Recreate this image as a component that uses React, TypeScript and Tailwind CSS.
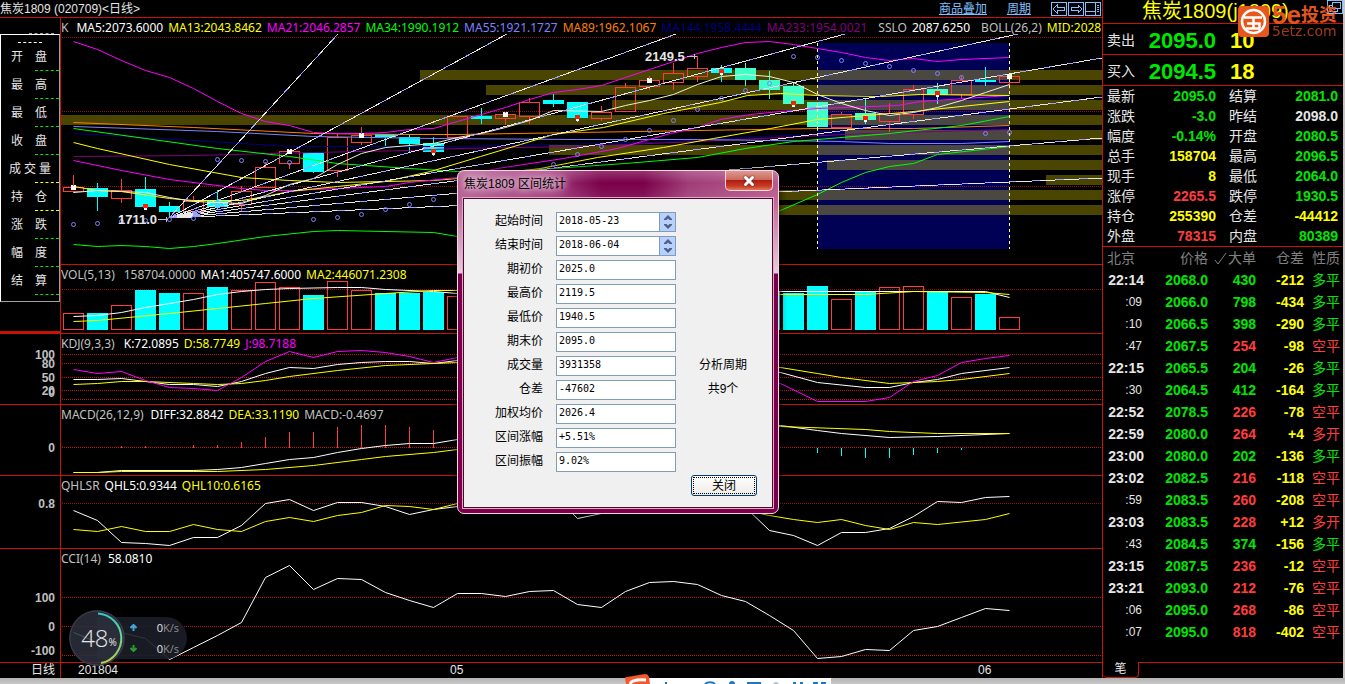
import { ReactNode } from "react";
import { X } from "lucide-react";

type Pt = [number, number];

const STEP = 24;
const FIRST_X = 73;
const xOf = (i: number) => FIRST_X + i * STEP;

// [body top, body bottom, high, low, up]
const candles: [number, number, number, number, boolean][] = [
  [187, 191, 175, 193, true],
  [188, 197, 183, 211, false],
  [190, 198, 179, 203, true],
  [189, 207, 177, 207, false],
  [206, 212, 202, 218, false],
  [201, 211, 196, 213, true],
  [201, 207, 190, 209, false],
  [191, 204, 186, 212, true],
  [167, 187, 162, 187, true],
  [151, 163, 150, 169, true],
  [153, 172, 153, 173, false],
  [137, 170, 133, 177, true],
  [135, 142, 127, 145, true],
  [134, 137, 134, 146, false],
  [137, 144, 134, 152, false],
  [143, 152, 137, 156, false],
  [116, 137, 116, 139, true],
  [116, 119, 108, 124, false],
  [114, 118, 112, 125, true],
  [102, 116, 98, 124, true],
  [100, 104, 94, 107, false],
  [102, 118, 102, 122, false],
  [112, 118, 106, 121, true],
  [87, 111, 83, 111, true],
  [80, 86, 76, 90, true],
  [73, 82, 63, 90, true],
  [68, 76, 56, 82, true],
  [68, 73, 65, 82, false],
  [68, 80, 63, 86, false],
  [80, 90, 71, 99, false],
  [86, 104, 82, 106, false],
  [102, 127, 102, 131, false],
  [114, 127, 112, 129, true],
  [113, 120, 98, 124, false],
  [113, 121, 103, 134, true],
  [89, 114, 85, 119, true],
  [89, 95, 83, 104, false],
  [80, 94, 76, 98, true],
  [80, 82, 67, 86, false],
  [76, 82, 73, 89, true],
];

const volumeTops = [
  313, 313, 305, 290, 293, 293, 287, 290, 282, 287, 295, 281, 290, 293, 293, 292, 296, 292, 290, 288,
  294, 291, 296, 286, 290, 288, 285, 291, 289, 292, 293, 286, 299, 292, 287, 286, 292, 297, 294, 317,
];

const macdEnds: Pt[] = [
  [2, 446], [3, 446], [5, 445], [6, 445], [7, 442], [8, 437], [9, 432], [10, 432], [11, 427], [12, 425],
  [13, 425], [14, 427], [15, 430], [31, 453], [32, 456], [33, 458], [34, 458], [35, 455], [36, 453], [37, 450],
];

// signal marks on candles, white for tops and red for bottoms
const whiteMarks: Pt[] = [[0, 187], [9, 151], [12, 135], [18, 114], [24, 80], [39, 76]];
const redMarks: Pt[] = [[3, 206], [15, 151], [21, 117], [27, 71], [30, 103], [33, 118], [36, 93]];

const bands: Pt[] = [
  [420, 70], [486, 85], [612, 100], [61, 115], [845, 130], [549, 145], [827, 160], [1046, 175], [700, 190], [700, 205],
];

const fanEnds: Pt[] = [
  [338, 34], [507, 34], [676, 34], [845, 34], [1018, 34], [1102, 58], [1102, 97], [1102, 138], [1102, 178],
];

const sarDots: Pt[] = [
  [73, 224], [97, 223], [121, 221], [145, 220], [169, 219], [193, 218], [217, 159], [241, 160], [265, 161], [289, 162],
  [313, 219], [337, 217], [361, 214], [385, 209], [409, 204], [433, 199], [553, 164], [577, 154], [601, 146], [625, 139],
  [649, 130], [673, 120], [697, 109], [721, 98], [745, 90], [769, 83], [793, 56], [817, 57], [841, 60], [865, 63],
  [889, 66], [913, 70], [937, 73], [961, 77], [985, 133], [1009, 132],
];

const mainLines: { color: string; pts: string }[] = [
  { color: "#000080", pts: "73,133 145,137 289,146 457,146 649,142 780,135 817,134" },
  { color: "#800080", pts: "73,156 193,155 313,152 409,150 457,148 577,146 697,141 780,137 865,133 937,131 1009,129" },
  { color: "#ff8000", pts: "73,122 193,127 313,133 409,134 457,134 577,132 697,130 817,128 913,128 1009,125" },
  { color: "#8080ff", pts: "73,126 217,131 313,136 433,138 577,139 697,139 770,140 841,141 889,143 961,143 1009,141" },
  { color: "#00ff00", pts: "73,128 145,138 217,148 289,156 337,163 409,168 457,171 505,171 553,168 625,163 697,157 745,148 793,141 865,135 889,133 961,125 1009,116" },
  { color: "#ffff00", pts: "73,142 97,148 169,164 241,177 289,180 337,182 433,180 457,178 540,168 597,157 663,147 713,138 770,128 817,119 903,112 1009,101" },
  { color: "#ff00ff", pts: "73,160 121,170 169,179 241,188 265,190 289,190 337,188 385,186 409,182 457,177 497,168 563,158 617,148 670,133 697,127 720,119 750,114 780,111 817,108 897,105 920,101 1009,95" },
  { color: "#ffff00", pts: "73,186 97,190 121,191 169,198 193,200 241,200 265,196 289,191 337,186 385,181 430,171 480,156 520,144 553,134 603,127 663,113 720,102 747,95 780,93 817,95 880,96 920,94 1009,95" },
  { color: "#f0f0d0", pts: "73,192 97,190 145,192 169,197 193,201 241,203 265,195 289,184 313,178 337,164 361,153 385,147 433,143 457,137 481,133 505,127 529,120 553,110 601,111 625,105 649,100 673,94 697,84 721,76 745,74 769,76 793,82 817,94 841,103 865,110 889,115 913,112 937,107 961,100 985,92 1009,84" },
  { color: "#ff00ff", pts: "73,41 97,49 121,60 145,70 169,77 193,88 217,101 241,113 265,121 289,125 313,132 337,133 361,133 385,132 409,129 433,128 457,121 481,114 505,107 529,99 553,92 577,89 601,85 625,77 649,69 673,61 697,53 721,47 745,42 769,41 793,44 817,48 841,52 865,57 889,60 913,58 937,61 961,59 1009,57" },
  { color: "#00ff00", pts: "73,244 97,246 121,245 145,246 169,248 193,246 217,243 265,236 313,231 337,230 433,232 457,236 600,240 720,230 780,210 817,194 841,182 865,172 889,166 913,163 937,154 1009,146" },
];

const quotes = [
  ["最新", "2095.0", "text-[#00e600]", "结算", "2081.0", "text-[#00e600]"],
  ["涨跌", "-3.0", "text-[#00e600]", "昨结", "2098.0", "text-[#e6e6e6]"],
  ["幅度", "-0.14%", "text-[#00e600]", "开盘", "2080.5", "text-[#00e600]"],
  ["总手", "158704", "text-[#ffff00]", "最高", "2096.5", "text-[#00e600]"],
  ["现手", "8", "text-[#ffff00]", "最低", "2064.0", "text-[#00e600]"],
  ["涨停", "2265.5", "text-[#ff3c3c]", "跌停", "1930.5", "text-[#00e600]"],
  ["持仓", "255390", "text-[#ffff00]", "仓差", "-44412", "text-[#ffff00]"],
  ["外盘", "78315", "text-[#ff3c3c]", "内盘", "80389", "text-[#00e600]"],
];

const ticks = [
  ["22:14", "2068.0", "430", "-212", "多平"],
  [":09", "2066.0", "798", "-434", "多平"],
  [":10", "2066.5", "398", "-290", "多平"],
  [":47", "2067.5", "254", "-98", "空平"],
  ["22:15", "2065.5", "204", "-26", "多平"],
  [":30", "2064.5", "412", "-164", "多平"],
  ["22:52", "2078.5", "226", "-78", "空平"],
  ["22:59", "2080.0", "264", "+4", "多开"],
  ["23:00", "2080.0", "202", "-136", "多平"],
  ["23:02", "2082.5", "216", "-118", "空平"],
  [":59", "2083.5", "260", "-208", "空平"],
  ["23:03", "2083.5", "228", "+12", "多开"],
  [":43", "2084.5", "374", "-156", "多平"],
  ["23:15", "2087.5", "236", "-12", "空平"],
  ["23:21", "2093.0", "212", "-76", "空平"],
  [":06", "2095.0", "268", "-86", "空平"],
  [":07", "2095.0", "818", "-402", "空平"],
];

const sideRows = [
  ["开盘", "border-[#00e600]"],
  ["最高", "border-[#00e600]"],
  ["最低", "border-[#00e600]"],
  ["收盘", "border-[#00e600]"],
  ["成交量", "border-[#ffff00]"],
  ["持仓", "border-[#ffff00]"],
  ["涨跌", "border-[#00e600]"],
  ["幅度", "border-[#00e600]"],
  ["结算", "border-[#00e600]"],
];

const stats = [
  ["起始时间", "2018-05-23"],
  ["结束时间", "2018-06-04"],
  ["期初价", "2025.0"],
  ["最高价", "2119.5"],
  ["最低价", "1940.5"],
  ["期末价", "2095.0"],
  ["成交量", "3931358"],
  ["仓差", "-47602"],
  ["加权均价", "2026.4"],
  ["区间涨幅", "+5.51%"],
  ["区间振幅", "9.02%"],
];

const Grid = ({ ys, color = "#c81414" }: { ys: number[]; color?: string }) => (
  <>
    {ys.map((y) => (
      <line key={y} x1="62" x2="1102" y1={y + 0.5} y2={y + 0.5} stroke={color} strokeDasharray="1 1" />
    ))}
  </>
);

const Line = ({ pts, color }: { pts: string; color: string }) => (
  <polyline points={pts} fill="none" stroke={color} strokeWidth="1" transform="translate(0.5 0.5)" shapeRendering="auto" />
);

const Legend = ({ items }: { items: [string, string][] }) => (
  <div className="z-10 flex h-[19px] items-center gap-[5px] overflow-hidden font-['Noto_Sans',sans-serif] text-[12px] leading-[19px] whitespace-nowrap [grid-area:1/1]">
    {items.map(([text, color]) => (
      <span key={text} className={color}>{text}</span>
    ))}
  </div>
);

function Chart({ top, height, legend, children }: { top: number; height: number; legend: ReactNode; children: ReactNode }) {
  return (
    <>
      <svg
        className="h-full w-full [grid-area:1/1]"
        viewBox={`61 ${top} 1041 ${height}`}
        preserveAspectRatio="none"
        shapeRendering="crispEdges"
      >
        {children}
      </svg>
      {legend}
    </>
  );
}

// scale labels beside a chart: [text, baseline]
const Scale = ({ top, height, marks }: { top: number; height: number; marks: [string, number][] }) => (
  <svg className="h-full w-full" viewBox={`0 ${top} 60 ${height}`}>
    {marks.map(([text, y]) => (
      <text
        key={text}
        x="55"
        y={y}
        textAnchor="end"
        className="fill-[#c0c0c0] font-['Liberation_Sans',sans-serif] text-[12px] font-bold"
      >
        {text}
      </text>
    ))}
  </svg>
);

function MainChart() {
  return (
    <Chart
      top={18}
      height={246}
      legend={
        <Legend
          items={[
            ["K", "text-[#c0c0c0] pr-[3px]"],
            ["MA5:2073.6000", "text-white"],
            ["MA13:2043.8462", "text-[#ffff00]"],
            ["MA21:2046.2857", "text-[#ff00ff]"],
            ["MA34:1990.1912", "text-[#00ff00]"],
            ["MA55:1921.1727", "text-[#8080ff]"],
            ["MA89:1962.1067", "text-[#ff8000]"],
            ["MA144:1958.4444", "text-[#000080]"],
            ["MA233:1954.0021", "text-[#800080]"],
            ["SSLO", "text-[#c0c0c0] pl-[6px]"],
            ["2087.6250", "text-white"],
            ["BOLL(26,2)", "text-[#c0c0c0] pl-[6px]"],
            ["MID:2028.7500", "text-[#ffff00]"],
          ]}
        />
      }
    >
      <rect x="817" y="43" width="193" height="206" fill="#000054" />
      {bands.map(([x, y]) => (
        <g key={y}>
          <rect x={x} y={y} width={1102 - x} height="10" fill="#4a4500" />
          {x < 1009 && <rect x={Math.max(x, 817)} y={y} width={1010 - Math.max(x, 817)} height="10" fill="#4b4841" />}
        </g>
      ))}
      <Grid ys={[37, 111, 186]} color="#960f0f" />
      {candles.map(([t, b, hi, lo, up], i) => {
        const x = xOf(i);
        const color = up ? "#ff3c3c" : i > 27 && i < 37 ? "#40ffc8" : "#00ffff";
        return (
          <g key={i}>
            {up ? (
              <>
                <path d={`M${x + 0.5} ${hi}V${t}M${x + 0.5} ${b}V${lo}`} stroke={color} />
                <rect x={x - 9.5} y={t + 0.5} width="20" height={b - t} fill="none" stroke={color} />
              </>
            ) : (
              <>
                <path d={`M${x + 0.5} ${hi}V${lo}`} stroke={color} />
                <rect x={x - 10} y={t} width="21" height={b - t} fill={color} />
              </>
            )}
          </g>
        );
      })}
      {mainLines.map((l, i) => (
        <Line key={i} pts={l.pts} color={l.color} />
      ))}
      {fanEnds.map(([x, y]) => (
        <g key={`${x}-${y}`} fill="none">
          <path d={`M169 218L${x} ${y}`} stroke="#e8e8e8" />
          <path d={`M169 218L${x} ${y}`} stroke="#a0a0ff" strokeDasharray="8 16" />
        </g>
      ))}
      {sarDots.map(([x, y]) => (
        <circle key={x} cx={x + 0.5} cy={y + 0.5} r="2" fill="none" stroke="#8080ff" shapeRendering="auto" />
      ))}
      {whiteMarks.map(([i, y]) => (
        <path key={i} d={`M${xOf(i) - 2} ${y - 2}h2v1h1v-1h2v5h-5z`} fill="#ffffff" />
      ))}
      {redMarks.map(([i, y]) => (
        <g key={i}>
          <rect x={xOf(i) - 2} y={y - 2} width="5" height="4" fill="#ff1e00" />
          <path d={`M${xOf(i) - 1} ${y + 2}h3v2h-3z`} fill="#ffffff" />
        </g>
      ))}
      <path d="M817.5 43V249M1009.5 43V249" stroke="#ffff80" strokeDasharray="3 3" />
      <text x="645" y="61" className="fill-[#e6e6e6] font-['Liberation_Sans',sans-serif] text-[13px] font-bold">2149.5</text>
      <path d="M687 56.500H697M694.500 54V59" stroke="#c0c0c0" />
      <text x="118" y="224" className="fill-[#e6e6e6] font-['Liberation_Sans',sans-serif] text-[13px] font-bold">1711.0</text>
      <path d="M158 219.500H168M166.500 217V222" stroke="#c0c0c0" />
    </Chart>
  );
}

function VolumeChart() {
  return (
    <Chart
      top={265}
      height={68}
      legend={
        <Legend
          items={[
            ["VOL(5,13)", "text-[#c0c0c0] pr-1"],
            ["158704.0000", "text-[#c0c0c0]"],
            ["MA1:405747.6000", "text-white"],
            ["MA2:446071.2308", "text-[#ffff00]"],
          ]}
        />
      }
    >
      <Grid ys={[289]} color="#960f0f" />
      {volumeTops.map((y, i) =>
        candles[i][4] ? (
          <rect key={i} x={xOf(i) - 9.5} y={y + 0.5} width="20" height={329 - y} fill="none" stroke="#ff3c3c" />
        ) : (
          <rect key={i} x={xOf(i) - 10} y={y} width="21" height={330 - y} fill="#00ffff" />
        )
      )}
      <Line color="#ffffff" pts="73,316 97,315 121,312 145,307 169,303 193,299 217,294 241,291 265,289 289,288 337,287 361,287 385,289 433,291 457,293 780,291 985,291 1009,297" />
      <Line color="#ffff00" pts="73,321 97,320 169,313 217,308 265,303 313,298 385,293 433,290 457,290 780,294 865,294 913,291 985,292 1009,294" />
    </Chart>
  );
}

function KdjChart() {
  return (
    <Chart
      top={334}
      height={70}
      legend={
        <Legend
          items={[
            ["KDJ(9,3,3)", "text-[#c0c0c0] pr-1"],
            ["K:72.0895", "text-white"],
            ["D:58.7749", "text-[#ffff00]"],
            ["J:98.7188", "text-[#ff00ff]"],
          ]}
        />
      }
    >
      <Grid ys={[354, 363, 377, 390, 399]} />
      <Line color="#ffffff" pts="73,379 97,379 121,378 145,381 169,384 193,384 217,386 241,381 265,373 289,367 313,368 337,364 361,362 385,361 409,361 433,363 457,360 600,356 780,372 817,382 865,387 889,387 913,382 937,379 961,373 1009,367" />
      <Line color="#ffff00" pts="73,384 97,383 121,381 145,381 193,383 217,384 241,383 265,380 289,376 337,370 385,365 433,363 457,362 600,358 780,367 817,373 841,377 889,383 937,381 961,379 1009,373" />
      <Line color="#ff00ff" pts="73,369 97,373 121,371 145,380 169,387 193,388 217,390 241,377 265,361 289,351 313,357 337,351 361,350 385,352 409,356 433,362 457,357 600,352 780,383 817,401 865,401 889,397 913,381 937,375 961,362 985,358 1009,355" />
    </Chart>
  );
}

function MacdChart() {
  return (
    <Chart
      top={405}
      height={70}
      legend={
        <Legend
          items={[
            ["MACD(26,12,9)", "text-[#c0c0c0] pr-[2px]"],
            ["DIFF:32.8842", "text-white"],
            ["DEA:33.1190", "text-[#ffff00]"],
            ["MACD:-0.4697", "text-[#c0c0c0]"],
          ]}
        />
      }
    >
      <Grid ys={[447]} />
      {macdEnds.map(([i, y]) => (
        <path key={i} d={`M${xOf(i) + 0.5} 447.500V${y}`} stroke={y < 447 ? "#ff3c3c" : "#00ffff"} />
      ))}
      <Line color="#ffffff" pts="73,472 97,472 121,470 193,470 217,469 241,467 265,463 289,459 313,457 337,452 361,448 385,445 409,443 433,443 457,439 600,430 780,425 817,430 841,433 889,437 937,436 1009,433" />
      <Line color="#ffff00" pts="73,472 97,472 121,471 217,471 265,469 313,465 361,459 385,456 433,452 457,449 600,435 780,426 865,429 889,431 937,433 1009,433" />
    </Chart>
  );
}

function QhlsrChart() {
  return (
    <Chart
      top={476}
      height={72}
      legend={
        <Legend
          items={[
            ["QHLSR", "text-[#c0c0c0]"],
            ["QHL5:0.9344", "text-white"],
            ["QHL10:0.6165", "text-[#ffff00]"],
          ]}
        />
      }
    >
      <Grid ys={[503]} color="#960f0f" />
      <Line color="#ffffff" pts="73,510 97,520 121,542 145,543 169,545 193,537 217,537 241,525 265,503 289,499 313,510 337,502 361,502 385,506 409,514 433,509 457,506 553,494 577,518 601,513 721,500 745,507 769,530 793,535 817,545 841,532 865,532 889,528 913,516 937,501 961,502 985,497 1009,496" />
      <Line color="#ffff00" pts="73,529 97,531 121,526 145,531 169,531 193,524 217,529 241,531 265,521 289,517 313,521 337,515 361,512 385,505 409,506 433,509 457,503 600,500 745,510 769,515 793,519 817,522 841,519 865,525 889,529 913,522 937,524 985,519 1009,513" />
    </Chart>
  );
}

function CciChart() {
  return (
    <Chart
      top={549}
      height={113}
      legend={<Legend items={[["CCI(14)", "text-[#c0c0c0] pr-[2px]"], ["58.0810", "text-white"]]} />}
    >
      <Grid ys={[597, 626, 655]} />
      <Line color="#ffffff" pts="73,632 97,642 121,632 145,638 169,659 193,647 217,635 241,622 265,577 289,565 313,589 337,578 361,579 385,592 409,600 433,607 457,593 481,593 505,596 529,591 553,590 577,604 601,607 625,591 649,582 673,581 697,584 721,595 745,601 769,615 793,630 817,658 841,656 865,649 889,650 913,630 937,626 961,617 985,608 1009,610" />
    </Chart>
  );
}

function TitleBar() {
  return (
    <header className="flex h-[17px] items-center justify-between pr-px text-[12px] leading-4">
      <h1 className="text-[#e6e6e6]">焦炭1809 (020709)&lt;日线&gt;</h1>
      <nav className="flex items-center gap-5 text-[#80c0ff]">
        <a href="#overlay" className="underline">商品叠加</a>
        <a href="#period" className="underline">周期</a>
        <div className="flex gap-px">
          <button aria-label="左移">
            <svg width="16" height="14" fill="none" stroke="#80c0ff" shapeRendering="crispEdges">
              <path d="M.5 .5h15v13h-15z" />
              <path d="M2 7l4-4v2.500h7v3h-7V11z" />
            </svg>
          </button>
          <button aria-label="右移">
            <svg width="16" height="14" fill="none" stroke="#80c0ff" shapeRendering="crispEdges">
              <path d="M.5 .5h15v13h-15z" />
              <path d="M14 7l-4-4v2.500h-7v3h7V11z" />
            </svg>
          </button>
          <button aria-label="布局">
            <svg width="16" height="14" fill="none" stroke="#80c0ff" shapeRendering="crispEdges">
              <path d="M.5 .5h15v13h-15zM10.500 0v14M0 9.500h10" />
              <path d="M12 3.500h2M12 5.500h2M12 7.500h2M12 9.500h2" />
            </svg>
          </button>
        </div>
      </nav>
    </header>
  );
}

function SideTable() {
  return (
    <div className="flex h-full flex-col border-r border-[#c81400]">
      <div className="h-4 pt-[15px]">
        <div className="ml-[29px] w-[25px] border-t border-dashed border-[#a0a0a0]" />
      </div>
      <div className="h-[268px] border border-t-white border-r-[#a0a0a0] border-b-[#a0a0a0] border-l-white text-[12px] text-[#e6e6e6]">
        <div className="mx-auto mt-[7px] w-6 border-t border-dashed border-white" />
        {sideRows.map(([name, color]) => (
          <div key={name} className="flex h-7 flex-col justify-between">
            <div className={name.length > 2 ? "mx-auto flex w-[42px] justify-between pt-[6px] leading-4" : "ml-[10px] flex w-9 justify-between pt-[6px] leading-4"}>
              {name.split("").map((c) => (
                <span key={c}>{c}</span>
              ))}
            </div>
            <div className={`ml-auto w-6 border-t border-dashed ${color}`} />
          </div>
        ))}
      </div>
      <div className="mt-auto border-t-2 border-[#c81400]" />
    </div>
  );
}

function ChartGrid() {
  const cell = "grid min-w-0 grid-rows-1 overflow-hidden border-t border-[#c81400]";
  const axis = "border-t border-r border-[#c81400]";
  return (
    <div className="grid grid-cols-[61px_minmax(0,1fr)] grid-rows-[247px_69px_71px_71px_73px_114px_16px]">
      <div className="row-span-2 border-t border-[#c81400]"><SideTable /></div>
      <div className={cell}><MainChart /></div>
      <div className={cell}><VolumeChart /></div>
      <div className={axis}>
        <Scale top={334} height={70} marks={[["100", 359], ["80", 368], ["50", 382], ["20", 395], ["0", 397]]} />
      </div>
      <div className={cell}><KdjChart /></div>
      <div className={axis}><Scale top={405} height={70} marks={[["0", 452]]} /></div>
      <div className={cell}><MacdChart /></div>
      <div className={axis}><Scale top={476} height={72} marks={[["0.8", 508]]} /></div>
      <div className={cell}><QhlsrChart /></div>
      <div className={axis}><Scale top={549} height={113} marks={[["100", 602], ["0", 631], ["-100", 655]]} /></div>
      <div className={cell}><CciChart /></div>
      <div className="border-t border-r border-[#c81400] pr-[5px] text-right text-[12px] leading-[15px] text-[#e6e6e6]">日线</div>
      <div className="grid grid-cols-[372px_528px_1fr] border-t border-[#c81400] pl-[17px] text-[12px] leading-[15px] text-[#e6e6e6]">
        <span>201804</span>
        <span>05</span>
        <span>06</span>
      </div>
    </div>
  );
}

function Watermark() {
  return (
    <div className="absolute top-[6px] right-1 flex gap-[3px] text-[#e0561e]">
      <svg width="31" height="31" viewBox="0 0 31 31">
        <rect width="31" height="31" rx="4" fill="#e8561c" />
        <circle cx="15.5" cy="15.500" r="11.500" fill="none" stroke="#fff" strokeWidth="2.500" />
        <path d="M6 11.500h18M15.500 12v11M9 17.500h6M15.500 17.500h6v5M8 22.500h14" fill="none" stroke="#fff" strokeWidth="2.500" />
      </svg>
      <div className="flex w-[67px] flex-col whitespace-nowrap">
        <div className="flex items-center leading-[18px] font-bold">
          <span className="text-[26px]">5e</span>
          <span className="text-[18px]">投资</span>
        </div>
        <span className="font-['DejaVu_Sans',sans-serif] text-[14px] leading-[14px] opacity-70">5etz.com</span>
      </div>
    </div>
  );
}

function QuotePanel() {
  return (
    <aside className="relative flex w-[241px] shrink-0 flex-col border-l border-[#c81400] text-[14px]">
      <h2 className="h-[23px] pl-[39px] text-[20px] leading-[23px] text-[#ffff00]">焦炭1809(j1809)</h2>
      <svg className="absolute top-0 right-0" width="16" height="14" fill="none" stroke="#80c0ff" shapeRendering="crispEdges">
        <path d="M.5 .5h15v13h-15zM5.500 2.500h8v6h-8z" />
        <path d="M5 5.500H2.500v6h8V9" />
      </svg>
      <Watermark />
      {[["卖出", "2095.0", "10"], ["买入", "2094.5", "18"]].map(([name, price, lots]) => (
        <div key={name} className="grid h-[31px] grid-cols-[32px_77px_1fr] items-center border-t border-[#c81400] pb-[2px] pl-1">
          <span className="text-[#e6e6e6]">{name}</span>
          <span className="text-right text-[22px] font-bold text-[#00e600]">{price}</span>
          <span className="pl-[14px] text-[22px] font-bold text-[#ffff00]">{lots}</span>
        </div>
      ))}
      <div className="h-[161px] border-t border-[#c81400]">
        {quotes.map(([a, av, ac, b, bv, bc]) => (
          <div key={a} className="grid h-5 grid-cols-[32px_77px_13px_32px_77px] items-center pl-1 leading-5">
            <span className="text-[#e6e6e6]">{a}</span>
            <span className={`text-right font-bold ${ac}`}>{av}</span>
            <span />
            <span className="text-[#e6e6e6]">{b}</span>
            <span className={`text-right font-bold ${bc}`}>{bv}</span>
          </div>
        ))}
      </div>
      <table className="w-full table-fixed border-t border-[#c81400] text-right leading-[22px]">
        <thead>
          <tr className="h-[22px] text-[#808080] [&>th]:p-0 [&>th]:font-normal [&>th]:whitespace-nowrap">
            <th className="w-[41px] pl-1! text-left">北京</th>
            <th className="w-16">价格</th>
            <th className="w-12">
              <div className="flex items-center justify-end gap-px">
                <svg width="13" height="13" fill="none" stroke="#808080"><path d="M1 8l3 4L12 1" /></svg>
                大单
              </div>
            </th>
            <th className="w-12">仓差</th>
            <th className="w-9">性质</th>
            <th />
          </tr>
        </thead>
        <tbody>
          {ticks.map(([time, price, lots, diff, kind], i) => {
            const color = kind === "多平" ? "text-[#00e600]" : "text-[#ff3c3c]";
            return (
              <tr key={i} className="h-[22px] font-bold">
                <td className={time.length > 3 ? "text-[#e6e6e6]" : "pr-[2px] text-[12px] font-normal text-[#e6e6e6]"}>{time}</td>
                <td className="text-[#00e600]">{price}</td>
                <td className={color}>{lots}</td>
                <td className="text-[#ffff00]">{diff}</td>
                <td className={`font-normal ${color}`}>{kind}</td>
              </tr>
            );
          })}
        </tbody>
      </table>
      <div className="mt-auto flex h-4">
        <button className="w-9 rounded-b-sm border-r border-b border-[#c81400] text-[12px] leading-[15px] text-[#e6e6e6]">笔</button>
        <div className="flex-1 border-t border-[#c81400]" />
      </div>
    </aside>
  );
}

function StatsDialog() {
  return (
    <section
      role="dialog"
      aria-labelledby="stats-title"
      className="absolute top-[170px] left-[457px] z-20 w-[322px] rounded-[7px] border border-[#ffd0e8] bg-[linear-gradient(180deg,rgba(255,255,255,0.2)_0px,rgba(255,255,255,0)_12px,rgba(255,255,255,0.1)_30px,rgba(255,255,255,0.7)_102px,#7a0049_103px),linear-gradient(90deg,#b0588c_0%,#9c3476_30%,#7a0049_45%,#7a0049_58%,#a03c78_72%,#b8588c_100%)] px-[5px] pb-[5px] shadow-[0_0_8px_rgba(0,0,0,0.8)]"
    >
      <div className="flex h-[27px] items-start justify-between">
        <h2
          id="stats-title"
          className="pl-px text-[12px] leading-[26px] text-black [text-shadow:0_0_6px_#fff,0_0_10px_#f4c4e0,0_0_14px_#f4c4e0]"
        >
          焦炭1809 区间统计
        </h2>
        <button
          aria-label="Close"
          className="flex h-5 w-12 items-center justify-center rounded-b-[5px] border border-t-0 border-[#ffd8d8] bg-[linear-gradient(180deg,#dc9a92_0%,#cc6a5c_45%,#b01c10_50%,#c83c28_80%,#e07850_100%)]"
        >
          <X className="h-[14px] w-[14px] text-white drop-shadow-[0_0_1px_#402020]" strokeWidth={5} />
        </button>
      </div>
      <div className="flex h-[310px] flex-col border border-[#4a0a30] bg-[#f0f0f0] pt-[12px] text-[12px] text-black outline outline-[#e8a8cc]">
        <div className="flex">
          <div className="flex flex-col gap-1">
            {stats.map(([name, value], i) => (
              <div key={name} className="grid h-5 grid-cols-[79px_120px] items-center gap-[13px]">
                <label htmlFor={`stat-${i}`} className="text-right leading-[21px]">{name}</label>
                <div className="flex h-5 border border-[#7f9db9] bg-white">
                  <input
                    id={`stat-${i}`}
                    defaultValue={value}
                    readOnly={i > 1}
                    className="w-full min-w-0 flex-1 pb-[2px] pl-[2px] font-['DejaVu_Sans_Mono',monospace] text-[10px] outline-none"
                  />
                  {i < 2 && (
                    <div className="flex w-4 flex-col border-l border-[#7f9db9] bg-[#b8d0ff]">
                      <button aria-label={`${name} 增加`} className="flex flex-1 items-center justify-center">
                        <svg width="8" height="5" fill="#4d6185"><path d="M0 4l4-4 4 4v1H5.500L4 3.500 2.500 5H0z" /></svg>
                      </button>
                      <button aria-label={`${name} 减少`} className="flex flex-1 items-center justify-center">
                        <svg width="8" height="5" fill="#4d6185"><path d="M0 1l4 4 4-4V0H5.500L4 1.500 2.500 0H0z" /></svg>
                      </button>
                    </div>
                  )}
                </div>
              </div>
            ))}
          </div>
          <div className="flex flex-1 flex-col gap-1 pt-36 pr-[2px] text-center leading-[21px]">
            <p className="h-5">分析周期</p>
            <p className="h-5">共9个</p>
          </div>
        </div>
        <button className="mt-[4px] mr-[15px] ml-auto h-[21px] w-[66px] rounded-[3px] border border-[#003c74] bg-[linear-gradient(180deg,#fff,#ecebe5)] p-px leading-4">
          <span className="block h-[17px] border border-dotted border-black leading-4">关闭</span>
        </button>
      </div>
    </section>
  );
}

function SpeedWidget() {
  return (
    <div className="absolute top-[610px] left-[69px] z-10 flex items-center font-['Open_Sans',sans-serif]">
      <div className="relative z-10 flex h-14 w-14 items-center justify-center rounded-full bg-[#2d303d]/85 text-[#e6e6e6]">
        <svg className="absolute inset-0" width="56" height="56" fill="none">
          <defs>
            <linearGradient id="ring" x1="0" y1="0" x2="0" y2="1">
              <stop offset="0" stopColor="#30c8c8" />
              <stop offset="0.500" stopColor="#70d890" />
              <stop offset="1" stopColor="#c0c850" />
            </linearGradient>
          </defs>
          <circle cx="28" cy="28" r="27" stroke="#3c4150" />
          <path d="M29 3.500A25 25 0 0 1 32 53" stroke="url(#ring)" strokeWidth="2" />
        </svg>
        <span className="pl-1 text-[24px] font-light">48</span>
        <span className="pt-2 text-[10px]">%</span>
      </div>
      <div className="-ml-7 flex h-[42px] w-[90px] flex-col rounded-r-full bg-[#1b1e28]/90 pr-2 pl-[33px] text-[11px] leading-[21px] text-[#909090]">
        {["up", "down"].map((dir) => (
          <div key={dir} className="flex items-center justify-between">
            <svg width="7" height="7" fill="none" stroke={dir === "up" ? "#40a8e0" : "#20a030"} strokeWidth="2">
              <path d={dir === "up" ? "M3.500 7V1M.5 4l3-3 3 3" : "M3.500 0v6M.5 3l3 3 3-3"} />
            </svg>
            <span><span className="text-[#e6e6e6]">0</span>K/s</span>
          </div>
        ))}
      </div>
    </div>
  );
}

function Taskbar() {
  return (
    <footer className="relative h-[6px] bg-[linear-gradient(180deg,#b4b4b4,#c8c8c8)]">
      <svg className="absolute bottom-0 left-[625px]" width="206" height="10" fill="none" stroke="#1e78c8" strokeWidth="2">
        <rect x="16" y="4" width="190" height="6" fill="#fff" stroke="none" />
        <path d="M0 4Q0 3 2 3L20 0q3 0 4 3l1 7H1z" fill="#f4582a" stroke="none" />
        <path d="M5 10q2-5 16-4" stroke="#fff" strokeWidth="3" />
        <path d="M41 8v2M80 10a6 4 0 0 1 10 0M122 9h14M168 9h3M175 9h3M188 9h5M196 9h5" />
        <circle cx="107" cy="10" r="3" fill="#1e78c8" stroke="none" />
        <circle cx="151" cy="11" r="3" fill="#b8c0d0" stroke="none" />
      </svg>
    </footer>
  );
}

export default function App() {
  return (
    <div className="relative min-h-screen overflow-hidden bg-black font-['Liberation_Sans','Noto_Sans_CJK_SC',sans-serif]">
      <main className="flex border-r-2 border-[#c8c4c4]">
        <div className="min-w-0 flex-1">
          <TitleBar />
          <ChartGrid />
        </div>
        <QuotePanel />
      </main>
      <Taskbar />
      <SpeedWidget />
      <StatsDialog />
    </div>
  );
}
